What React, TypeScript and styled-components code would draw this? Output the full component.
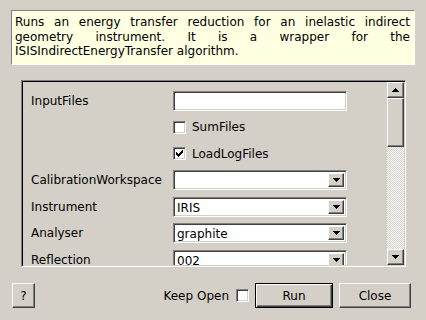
import styled, { createGlobalStyle, css } from "styled-components";

const GlobalStyle = createGlobalStyle`
  html, body {
    margin: 0;
    padding: 0;
    background: #d4d0c8;
  }
  * {
    box-sizing: border-box;
  }
`;

const sunken = css`
  border: 1px solid;
  border-color: #808080 #ffffff #ffffff #808080;
  box-shadow: inset 1px 1px #404040, inset -1px -1px #d4d0c8;
`;

const raised = css`
  border: 1px solid;
  border-color: #ffffff #404040 #404040 #ffffff;
  box-shadow: inset -1px -1px #808080, inset 1px 1px #d4d0c8;
`;

function DownArrow() {
  return (
    <svg width="7" height="4" viewBox="0 0 7 4" shapeRendering="crispEdges">
      <path d="M0 0h7v1h-1v1h-1v1h-1v1h-1v-1h-1v-1h-1v-1h-1z" fill="#000" />
    </svg>
  );
}

function UpArrow() {
  return (
    <svg width="7" height="4" viewBox="0 0 7 4" shapeRendering="crispEdges">
      <path d="M3 0h1v1h1v1h1v1h1v1h-7v-1h1v-1h1v-1h1z" fill="#000" />
    </svg>
  );
}

function CheckMark() {
  return (
    <svg width="7" height="7" viewBox="0 0 7 7" shapeRendering="crispEdges">
      <path
        d="M6 0h1v3h-1v1h-1v1h-1v1h-1v1h-1v-1h-1v-1h-1v-3h1v1h1v1h1v-1h1v-1h1z"
        fill="#000"
      />
    </svg>
  );
}

function Combo({ value }: { value: string }) {
  return (
    <ComboBox>
      <ComboText>{value}</ComboText>
      <DropButton>
        <DownArrow />
      </DropButton>
    </ComboBox>
  );
}

export default function App() {
  return (
    <>
      <GlobalStyle />
      <Window>
        <Info>
          Runs an energy transfer reduction for an inelastic indirect geometry
          instrument. It is a wrapper for the ISISIndirectEnergyTransfer
          algorithm.
        </Info>

        <Frame>
          <Form>
            <Row>
              <Label>InputFiles</Label>
              <TextField />
            </Row>
            <Row>
              <Label />
              <CheckLine>
                <CheckBox />
                SumFiles
              </CheckLine>
            </Row>
            <Row>
              <Label />
              <CheckLine>
                <CheckBox>
                  <CheckMark />
                </CheckBox>
                LoadLogFiles
              </CheckLine>
            </Row>
            <Row>
              <Label>CalibrationWorkspace</Label>
              <Combo value="" />
            </Row>
            <Row>
              <Label>Instrument</Label>
              <Combo value="IRIS" />
            </Row>
            <Row>
              <Label>Analyser</Label>
              <Combo value="graphite" />
            </Row>
            <Row>
              <Label>Reflection</Label>
              <Combo value="002" />
            </Row>
          </Form>

          <ScrollBar>
            <ScrollButton>
              <UpArrow />
            </ScrollButton>
            <Thumb />
            <Trough />
            <ScrollButton>
              <DownArrow />
            </ScrollButton>
          </ScrollBar>
        </Frame>

        <Footer>
          <Button $width={23}>?</Button>
          <KeepOpen>
            Keep Open
            <CheckBox />
          </KeepOpen>
          <Button $width={78} $default>
            Run
          </Button>
          <Button $width={72}>Close</Button>
        </Footer>
      </Window>
    </>
  );
}

/* ─── Styled Components ─────────────────────────── */

const Window = styled.div`
  width: 426px;
  height: 320px;
  padding: 10px 11px 0;
  display: flex;
  flex-direction: column;
  background: #d4d0c8;
  font-family: "DejaVu Sans", "Liberation Sans", sans-serif;
  font-size: 12px;
  color: #000;
`;

const Info = styled.div`
  height: 55px;
  padding: 4px 4px 0 3px;
  background: #ffffe1;
  border: 1px solid;
  border-color: #808080 #ffffff #ffffff #808080;
  line-height: 14.5px;
  text-align: justify;
`;

const Frame = styled.div`
  display: flex;
  height: 187px;
  margin: 15px 9px 0 10px;
  ${sunken};
  box-shadow: inset 1px 1px #000000, inset -1px -1px #d4d0c8;
  padding: 1px;
`;

const Form = styled.div`
  flex: 1;
  min-width: 0;
  overflow: hidden;
  display: flex;
  flex-direction: column;
  gap: 6.5px;
  padding: 8.5px 0 0 8px;
`;

const Row = styled.div`
  display: flex;
  align-items: center;
  height: 20px;
  flex-shrink: 0;
`;

const Label = styled.span`
  width: 142px;
  flex-shrink: 0;
  white-space: nowrap;
`;

const TextField = styled.div`
  width: 174px;
  height: 20px;
  background: #fff;
  ${sunken};
`;

const CheckLine = styled.label`
  display: flex;
  align-items: center;
  gap: 6px;
`;

const CheckBox = styled.span`
  width: 13px;
  height: 13px;
  flex-shrink: 0;
  display: flex;
  align-items: center;
  justify-content: center;
  background: #fff;
  ${sunken};
`;

const ComboBox = styled.div`
  width: 174px;
  height: 20px;
  flex-shrink: 0;
  display: flex;
  align-items: stretch;
  padding: 2px;
  background: #fff;
  ${sunken};
`;

const ComboText = styled.span`
  flex: 1;
  padding-left: 1px;
  line-height: 16px;
`;

const DropButton = styled.span`
  width: 16px;
  display: flex;
  align-items: center;
  justify-content: center;
  background: #d4d0c8;
  ${raised};
`;

const ScrollBar = styled.div`
  width: 17px;
  display: flex;
  flex-direction: column;
`;

const ScrollButton = styled.div`
  height: 16px;
  flex-shrink: 0;
  display: flex;
  align-items: center;
  justify-content: center;
  background: #d4d0c8;
  ${raised};
`;

const Thumb = styled.div`
  height: 49px;
  flex-shrink: 0;
  background: #d4d0c8;
  ${raised};
`;

const Trough = styled.div`
  flex: 1;
  background-image: conic-gradient(
    #ffffff 25%,
    #d4d0c8 0 50%,
    #ffffff 0 75%,
    #d4d0c8 0
  );
  background-size: 2px 2px;
`;

const Footer = styled.div`
  display: flex;
  align-items: center;
  margin: 16px 4px 0 1px;
  gap: 6px;
`;

const KeepOpen = styled.label`
  margin-left: auto;
  display: flex;
  align-items: center;
  gap: 7px;
`;

const Button = styled.button<{ $width: number; $default?: boolean }>`
  width: ${({ $width }) => $width}px;
  height: 25px;
  padding: 0;
  font-family: inherit;
  font-size: 12px;
  color: #000;
  background: #d4d0c8;
  ${raised};
  ${({ $default }) =>
    $default &&
    css`
      border-color: #000;
      box-shadow: inset 1px 1px #ffffff, inset -1px -1px #404040,
        inset -2px -2px #808080;
    `}
`;
